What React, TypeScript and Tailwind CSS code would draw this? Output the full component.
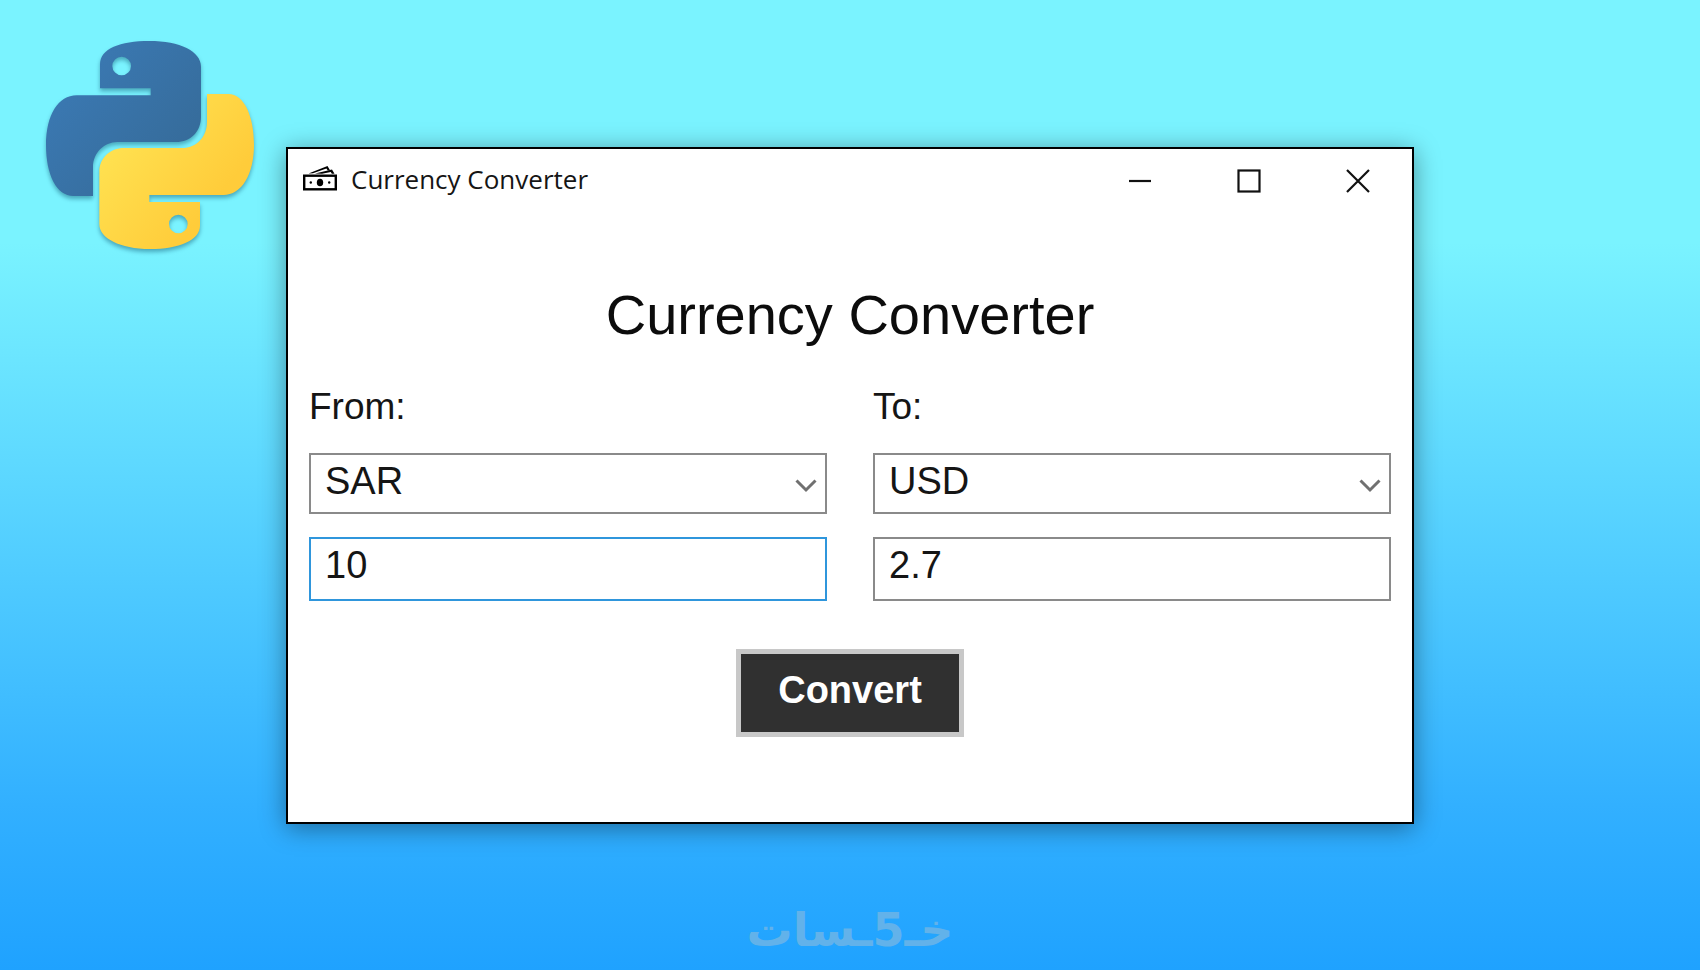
import React, { useState } from 'react'

// value of one unit in USD
const RATES: Record<string, number> = {
  SAR: 0.27,
  USD: 1,
  EUR: 1.08,
  GBP: 1.27,
}

function PythonLogo() {
  return (
    <svg
      viewBox="0 0 750 750"
      className="w-[250px] h-[250px] drop-shadow-[0_3px_2px_rgba(0,60,90,0.4)]"
      aria-hidden="true"
    >
      <defs>
        <linearGradient id="pyBlue" x1="0.1" y1="0.1" x2="0.85" y2="0.75">
          <stop offset="0" stopColor="#3b7ab5" />
          <stop offset="1" stopColor="#366c9b" />
        </linearGradient>
        <linearGradient id="pyYellow" x1="0.15" y1="0.3" x2="0.7" y2="0.75">
          <stop offset="0" stopColor="#ffe04f" />
          <stop offset="1" stopColor="#ffcc3a" />
        </linearGradient>
      </defs>
      <path
        fill="url(#pyBlue)"
        fillRule="evenodd"
        d="M210 205V133C210 86 270 63 358 63C450 63 513 94 513 140V290C513 334 482 366 438 366H262C222 366 189 400 189 440V528H130C80 528 48 465 48 375C48 285 85 226 140 226H362V205ZM275 110a28 28 0 1 0 0 56a28 28 0 1 0 0-56Z"
      />
      <path
        fill="url(#pyYellow)"
        fillRule="evenodd"
        d="M531 222H595C643 222 672 290 672 375C672 463 635 525 580 525H358V546H510V617C510 660 447 687 360 687C270 687 208 655 208 612V455C208 415 240 384 282 384H456C500 384 531 350 531 305ZM445 584a28 28 0 1 0 0 56a28 28 0 1 0 0-56Z"
      />
    </svg>
  )
}

function MoneyIcon() {
  return (
    <svg viewBox="0 0 34 26" className="w-[34px] h-[26px]" fill="none" aria-hidden="true">
      {/* two fanned notes behind the front one */}
      <path d="M5.5 7.5L24.5 0L27 4.2L24.8 4.6L23.4 2.6L10 7.2Z" fill="#000" />
      <path d="M12 7.6L29 3.6L31.5 7.8H28.8L27.8 6L19 7.8Z" fill="#000" />
      <rect x="1.2" y="9.7" width="31.6" height="13.6" stroke="#000" strokeWidth="2.4" />
      <ellipse cx="17" cy="16.5" rx="3.2" ry="3.8" fill="#000" />
      <circle cx="7.8" cy="16.5" r="1.2" fill="#000" />
      <circle cx="26.2" cy="16.5" r="1.2" fill="#000" />
    </svg>
  )
}

function WindowButton({ label, children }: { label: string; children: React.ReactNode }) {
  return (
    <button aria-label={label} className="w-[109px] h-16 flex items-center justify-center hover:bg-gray-200">
      <svg viewBox="0 0 24 24" className="w-6 h-6" fill="none" stroke="#111" strokeWidth="2.2">
        {children}
      </svg>
    </button>
  )
}

function CurrencySelect({
  id,
  value,
  onChange,
}: {
  id: string
  value: string
  onChange: (v: string) => void
}) {
  return (
    <div className="relative">
      <select
        id={id}
        value={value}
        onChange={e => onChange(e.target.value)}
        className="block w-full h-[61px] appearance-none rounded-none border-2 border-[#8a8a8a] bg-white
                   px-3.5 pb-1 text-[38px] leading-[52px] text-[#151515] outline-none"
      >
        {Object.keys(RATES).map(code => (
          <option key={code} value={code}>
            {code}
          </option>
        ))}
      </select>
      <svg
        viewBox="0 0 22 14"
        className="absolute right-2.5 top-[26px] w-[22px] h-3.5 pointer-events-none"
        fill="none"
        stroke="#707070"
        strokeWidth="3"
        aria-hidden="true"
      >
        <path d="M1.5 1.5L11 11L20.5 1.5" />
      </svg>
    </div>
  )
}

export default function App() {
  const [from, setFrom] = useState('SAR')
  const [to, setTo] = useState('USD')
  const [amount, setAmount] = useState('10')
  const [result, setResult] = useState('2.7')

  const handleConvert = () => {
    const n = parseFloat(amount)
    if (isNaN(n)) return
    setResult(String(Number(((n * RATES[from]) / RATES[to]).toFixed(2))))
  }

  return (
    <div
      className="relative min-h-screen flex items-center justify-center font-['Liberation_Sans',Arial,sans-serif]
                 bg-[linear-gradient(to_bottom,#7af3ff_0%,#7af3ff_25%,#32b0ff_83%,#1fa2ff_100%)]"
    >
      <div className="absolute left-[30px] top-5">
        <PythonLogo />
      </div>

      {/* App window */}
      <main className="w-full max-w-[1128px] bg-white border-2 border-black shadow-[0_4px_24px_rgba(0,0,0,0.4)]">
        <header className="flex items-center justify-between pl-[15px]">
          <div className="flex items-center gap-3.5 pb-1">
            <MoneyIcon />
            <span className="font-['Open_Sans',sans-serif] text-[26px] leading-9 text-[#151515]">
              Currency Converter
            </span>
          </div>
          <div className="flex">
            <WindowButton label="Minimize">
              <path d="M1 12H23" />
            </WindowButton>
            <WindowButton label="Maximize">
              <rect x="1.5" y="1.5" width="21" height="21" />
            </WindowButton>
            <WindowButton label="Close">
              <path d="M1 1L23 23M23 1L1 23" />
            </WindowButton>
          </div>
        </header>

        <div className="px-[21px] pt-[70px] pb-[85px]">
          <h1 className="text-center text-[56px] leading-16 text-[#0c0c0c]">Currency Converter</h1>

          <div className="mt-10 grid grid-cols-2 gap-x-[46px] text-[38px] text-[#151515]">
            <div className="flex flex-col">
              <label htmlFor="from" className="leading-10 mb-[26px] text-[37px]">From:</label>
              <CurrencySelect id="from" value={from} onChange={setFrom} />
              <input
                aria-label="Amount"
                value={amount}
                onChange={e => setAmount(e.target.value)}
                className="mt-[23px] w-full h-16 border-2 border-[#2f96dc] bg-white px-3.5 pb-1.5 outline-none"
              />
            </div>
            <div className="flex flex-col">
              <label htmlFor="to" className="leading-10 mb-[26px] text-[37px]">To:</label>
              <CurrencySelect id="to" value={to} onChange={setTo} />
              <input
                aria-label="Result"
                value={result}
                readOnly
                className="mt-[23px] w-full h-16 border-2 border-[#8a8a8a] bg-white px-3.5 pb-1.5 outline-none"
              />
            </div>
          </div>

          <div className="mt-12 flex justify-center">
            <button
              onClick={handleConvert}
              className="w-[228px] h-[88px] border-5 border-[#c8c8c8] bg-[#303030] pb-1 text-[38px] font-bold text-white"
            >
              Convert
            </button>
          </div>
        </div>
      </main>

      <div
        dir="rtl"
        className="absolute bottom-2 inset-x-0 flex justify-center items-baseline text-[46px] leading-16 font-bold
                   text-[#62b2ea] font-['DejaVu_Sans',sans-serif]"
      >
        <span>خـ</span>
        <span>5</span>
        <span>ـسات</span>
      </div>
    </div>
  )
}
